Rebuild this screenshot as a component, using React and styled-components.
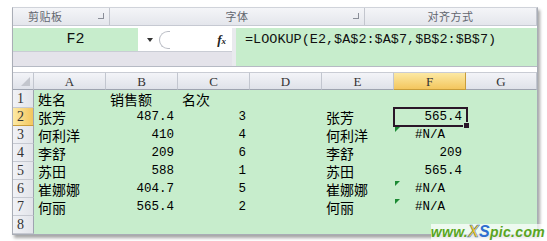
import React from "react";
import styled, { createGlobalStyle } from "styled-components";

const Global = createGlobalStyle`
  html, body {
    margin: 0;
    padding: 0;
    background: #ffffff;
  }
  body {
    font-family: "Noto Sans CJK SC", "Liberation Sans", sans-serif;
  }
`;

const Page = styled.div`
  position: relative;
  width: 547px;
  height: 241px;
  padding: 7px 0 0 12px;
  box-sizing: border-box;
  overflow: hidden;
`;

const Frame = styled.div`
  width: 524px;
  border: 1px solid #a9adb6;
  border-top-color: #d0d3da;
  box-shadow: 2px 3px 3px rgba(0, 0, 0, 0.35);
  background: #ffffff;
`;

const Ribbon = styled.div`
  display: grid;
  grid-template-columns: 97px 255px 1fr;
  height: 17px;
  background: linear-gradient(#f4f5f8, #e4e6ec);
  border-bottom: 1px solid #c6c9d2;
`;

const Group = styled.div`
  position: relative;
  display: flex;
  align-items: center;
  justify-content: ${(p) => (p.$left ? "flex-start" : "center")};
  padding-left: ${(p) => (p.$left ? "15px" : "0")};
  border-right: 1px solid #c3c6ce;
  font-size: 11px;
  line-height: 1;
  color: #62666f;
  letter-spacing: 0.5px;
`;

const Launcher = styled.span`
  position: absolute;
  right: 5px;
  top: 5px;
  width: 5px;
  height: 5px;
  border-right: 1px solid #8a8e98;
  border-bottom: 1px solid #8a8e98;
`;

const FormulaBar = styled.div`
  display: flex;
  height: 38px;
  margin-top: 2px;
  border-bottom: 1px solid #b6bac4;
`;

const NameSide = styled.div`
  display: flex;
  flex-direction: column;
  width: 219px;
  border-right: 4px solid #e9eaee;
`;

const NameRow = styled.div`
  display: flex;
  align-items: center;
  height: 23px;
  background: #ffffff;
  border-bottom: 1px solid #c9ccd4;
`;

const NameBox = styled.div`
  width: 125px;
  height: 100%;
  background: #c7edcc;
  display: flex;
  align-items: center;
  justify-content: center;
  font-family: "Liberation Mono", monospace;
  font-size: 15px;
  color: #111;
`;

const Arrow = styled.span`
  margin-left: 9px;
  width: 0;
  height: 0;
  border-left: 3px solid transparent;
  border-right: 3px solid transparent;
  border-top: 4px solid #333;
`;

const Handle = styled.span`
  margin-left: 6px;
  width: 10px;
  height: 16px;
  border: 1px solid #b9bcc4;
  border-right: none;
  border-radius: 10px 0 0 10px;
`;

const Fx = styled.span`
  margin-left: auto;
  margin-right: 6px;
  font-family: "Liberation Serif", serif;
  font-style: italic;
  font-weight: bold;
  font-size: 13px;
  color: #222;
  & small {
    font-size: 9px;
  }
`;

const NameBand = styled.div`
  flex: 1;
  background: #e4e3ea;
`;

const FormulaInput = styled.div`
  flex: 1;
  background: #c7edcc;
  padding: 4px 0 0 9px;
  font-family: "Liberation Mono", monospace;
  font-size: 13.5px;
  color: #111;
`;

const Sheet = styled.div`
  display: grid;
  grid-template-columns: 21px repeat(6, 72px) 1fr;
  grid-auto-rows: 18px;
  margin-top: 5px;
  background: #c7edcc;
`;

const ColHead = styled.div`
  display: flex;
  align-items: center;
  justify-content: center;
  font-family: "Liberation Serif", serif;
  font-size: 13px;
  line-height: 1;
  color: #333;
  background: ${(p) =>
    p.$active
      ? "linear-gradient(#fce9a4, #f3c65e)"
      : "linear-gradient(#f3f4f8, #dfe2e9)"};
  border-right: 1px solid ${(p) => (p.$active ? "#c99d3a" : "#c2c6cf")};
  border-bottom: 1px solid ${(p) => (p.$active ? "#c99d3a" : "#9ea4b0")};
  border-top: 1px solid #c9ccd4;
`;

const Corner = styled(ColHead)`
  position: relative;
  &::after {
    content: "";
    position: absolute;
    right: 3px;
    bottom: 3px;
    border-left: 9px solid transparent;
    border-bottom: 9px solid #c3c6cd;
  }
`;

const RowHead = styled.div`
  display: flex;
  align-items: center;
  padding-left: 4px;
  font-family: "Liberation Serif", serif;
  font-size: 14px;
  line-height: 1;
  color: #333;
  background: ${(p) =>
    p.$active
      ? "linear-gradient(90deg, #fce9a4, #f3c65e)"
      : "linear-gradient(90deg, #f1f2f6, #e2e4ea)"};
  border-right: 1px solid #9ea4b0;
  border-bottom: 1px solid ${(p) => (p.$active ? "#c99d3a" : "#c6c9d1")};
`;

const Cell = styled.div`
  position: relative;
  display: flex;
  align-items: center;
  justify-content: ${(p) => p.$align};
  padding: 0 4px;
  font-size: 14px;
  line-height: 16px;
  color: #000;
  white-space: nowrap;
  ${(p) =>
    p.$num &&
    `font-family: "Liberation Mono", monospace; font-size: 12.5px;`}
  ${(p) =>
    p.$flag &&
    `&::before {
      content: "";
      position: absolute;
      left: 1px;
      top: 1px;
      border-top: 5px solid #1b8a33;
      border-right: 5px solid transparent;
    }`}
`;

const Selection = styled.div`
  position: absolute;
  inset: -1px -2px -1px -1px;
  border: 2px solid #2a1628;
  pointer-events: none;
  &::after {
    content: "";
    position: absolute;
    right: -4px;
    bottom: -4px;
    width: 5px;
    height: 5px;
    background: #2a1628;
    border: 1px solid #c7edcc;
  }
`;

const Watermark = styled.div`
  position: absolute;
  right: 2px;
  bottom: 1px;
  font-family: "Liberation Sans", sans-serif;
  font-weight: bold;
  font-style: italic;
  font-size: 14px;
  line-height: 15px;
  color: #5aa51f;
  letter-spacing: 0.3px;
  background: rgba(255, 255, 255, 0.7);
  & .x {
    color: #f3c41a;
    -webkit-text-stroke: 0.5px #3b7fd0;
    font-size: 16px;
  }
  & .s {
    color: #2f6fd0;
    font-size: 16px;
  }
`;

const cols = ["A", "B", "C", "D", "E", "F", "G"];

const rows = [
  ["姓名", "销售额", "名次", "", "", "", ""],
  ["张芳", "487.4", "3", "", "张芳", "565.4", ""],
  ["何利洋", "410", "4", "", "何利洋", "#N/A", ""],
  ["李舒", "209", "6", "", "李舒", "209", ""],
  ["苏田", "588", "1", "", "苏田", "565.4", ""],
  ["崔娜娜", "404.7", "5", "", "崔娜娜", "#N/A", ""],
  ["何丽", "565.4", "2", "", "何丽", "#N/A", ""],
  ["", "", "", "", "", "", ""],
];

const isNum = (v) => /^[0-9.]+$/.test(v);

const alignOf = (v) => {
  if (v.startsWith("#")) return "center";
  if (isNum(v)) return "flex-end";
  return "flex-start";
};

const flagged = ["3-5", "6-5", "7-5"];

export default function App() {
  return (
    <Page>
      <Global />
      <Frame>
        <Ribbon>
          <Group $left>
            剪贴板
            <Launcher />
          </Group>
          <Group>
            字体
            <Launcher />
          </Group>
          <Group>对齐方式</Group>
        </Ribbon>
        <FormulaBar>
          <NameSide>
            <NameRow>
              <NameBox>F2</NameBox>
              <Arrow />
              <Handle />
              <Fx>
                f<small>x</small>
              </Fx>
            </NameRow>
            <NameBand />
          </NameSide>
          <FormulaInput>=LOOKUP(E2,$A$2:$A$7,$B$2:$B$7)</FormulaInput>
        </FormulaBar>
        <Sheet>
          <Corner />
          {cols.map((c) => (
            <ColHead key={c} $active={c === "F"}>
              {c}
            </ColHead>
          ))}
          {rows.map((r, i) => (
            <React.Fragment key={i}>
              <RowHead $active={i === 1}>{i + 1}</RowHead>
              {r.map((v, j) => (
                <Cell
                  key={j}
                  $align={alignOf(v)}
                  $num={isNum(v) || v.startsWith("#")}
                  $flag={flagged.includes(`${i + 1}-${j}`)}
                >
                  {v}
                  {i === 1 && j === 5 && <Selection />}
                </Cell>
              ))}
            </React.Fragment>
          ))}
        </Sheet>
      </Frame>
      <Watermark>
        www.<span className="x">X</span>
        <span className="s">S</span>pic.com
      </Watermark>
    </Page>
  );
}
